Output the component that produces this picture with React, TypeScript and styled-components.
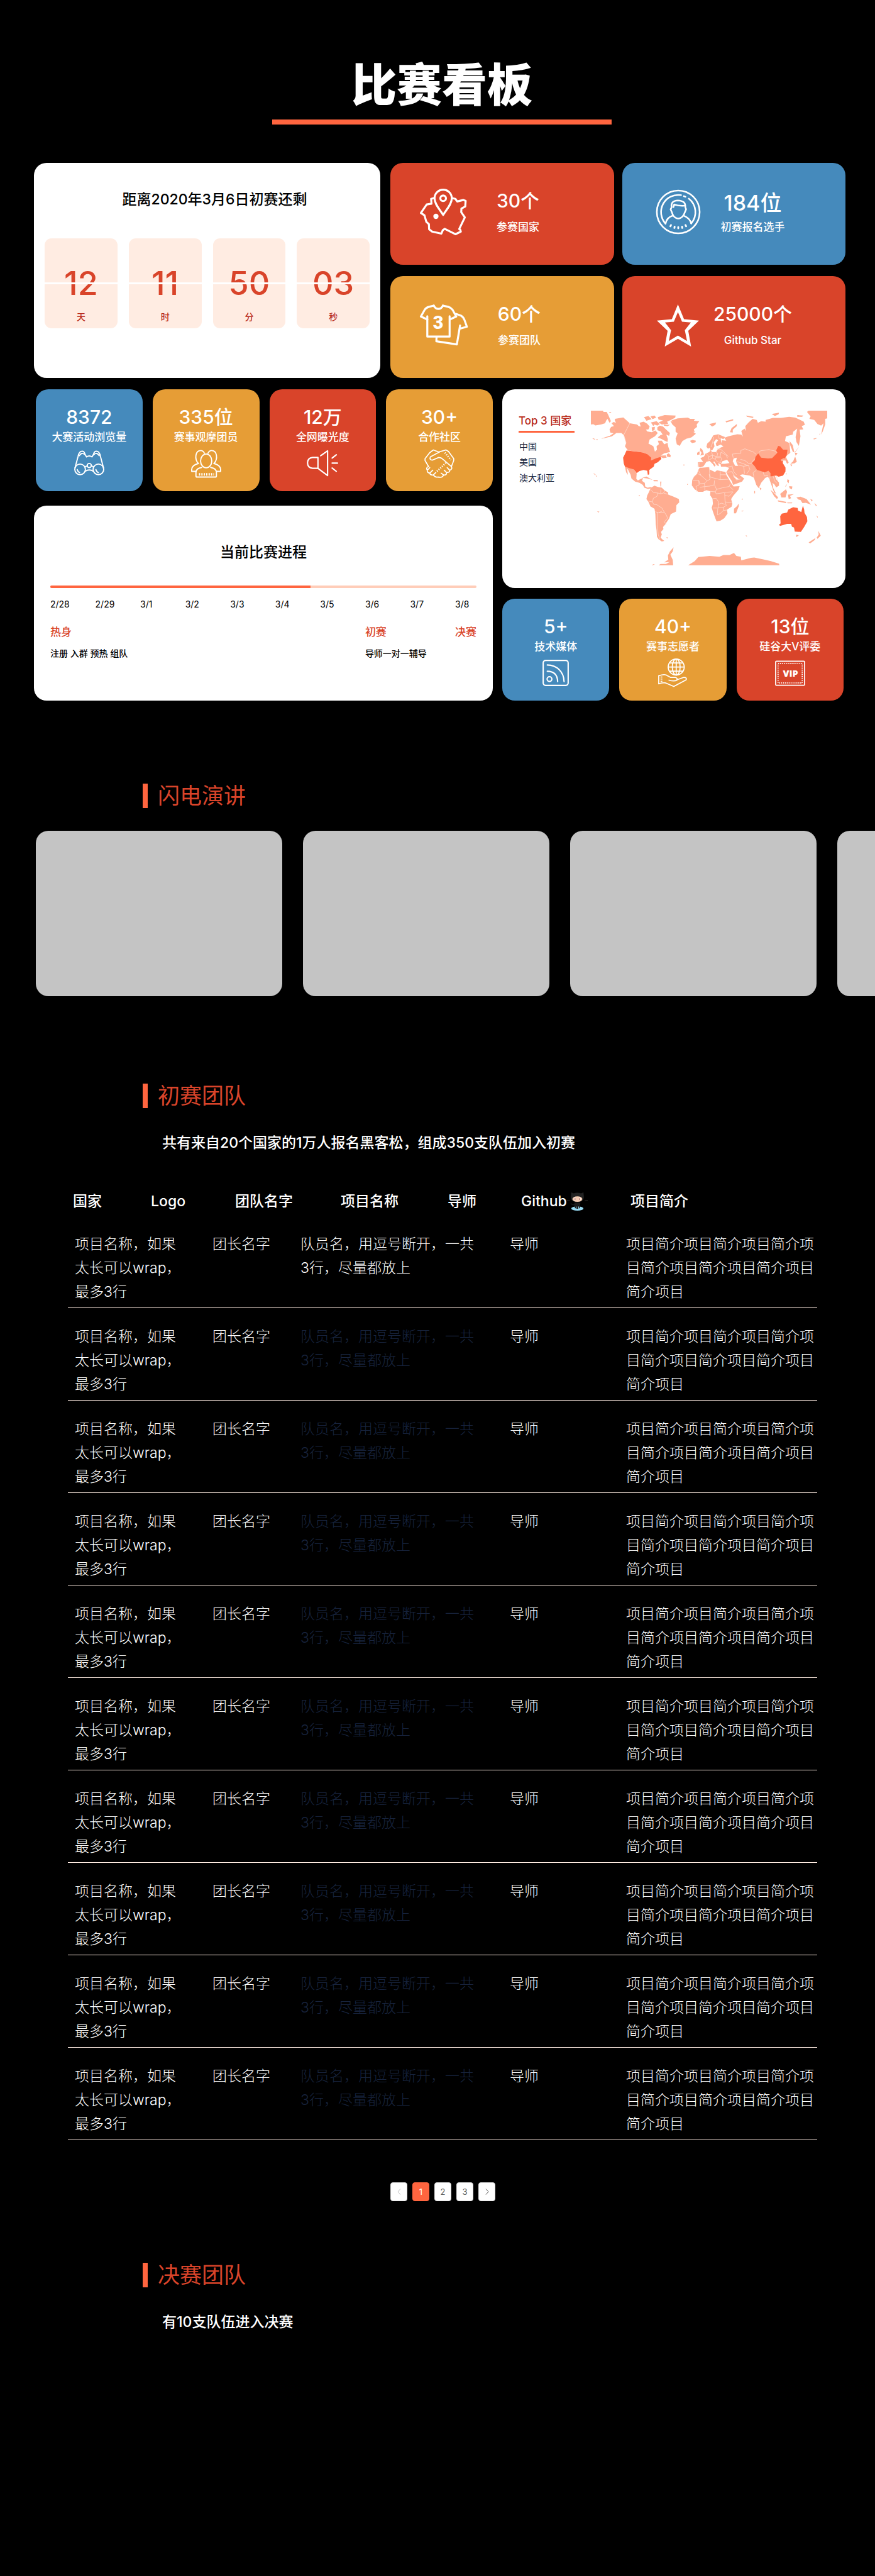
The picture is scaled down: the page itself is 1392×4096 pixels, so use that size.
import React from "react";
import styled, { createGlobalStyle } from "styled-components";

const palette = {
  red: "#d9442a",
  blue: "#458abc",
  orange: "#e69d36",
  coral: "#ff653f",
  land: "#ffad91",
  blush: "#ffece2",
  brick: "#b92b1b",
};

const GlobalStyle = createGlobalStyle`
  *, *::before, *::after { box-sizing: border-box; }
  body {
    margin: 0;
    background: #000;
    color: #fff;
    font-family: Inter, "Noto Sans CJK SC", sans-serif;
  }
  h1, h2, h3, p, ul, ol { margin: 0; padding: 0; }
  ul, ol { list-style: none; }
  svg { display: block; }
`;

const Page = styled.div`
  min-height: 100vh;
  padding: 95px 0 384px;
  overflow: hidden;
`;

const Header = styled.header`
  display: flex;
  flex-direction: column;
  align-items: center;
  padding-left: 14px;
`;

const PageTitle = styled.h1`
  font-size: 72px;
  font-weight: 900;
  line-height: 80px;
`;

const TitleRule = styled.div`
  width: 540px;
  max-width: 80%;
  height: 8px;
  margin-top: 15px;
  background: ${palette.coral};
`;

const Dashboard = styled.main`
  display: flex;
  flex-direction: column;
  gap: 18px;
  margin-top: 61px;
  padding: 0 47px 0 54px;
`;

const TopRow = styled.div`
  display: grid;
  grid-template-columns: 551fr 724fr;
  gap: 16px;
`;

const BottomRow = styled.div`
  display: grid;
  grid-template-columns: 730fr 546fr;
  gap: 15px;
`;

const Column = styled.div<{ $gap: number }>`
  display: flex;
  flex-direction: column;
  gap: ${(p) => p.$gap}px;
`;

const Panel = styled.section`
  border-radius: 20px;
  background: #fff;
  color: #000;
`;

const PanelTitle = styled.h2`
  font-size: 23px;
  font-weight: 500;
  line-height: 32px;
  text-align: center;
`;

const CountdownPanel = styled(Panel)`
  padding: 42px 17px 0;

  ${PanelTitle} {
    padding-left: 24px;
  }
`;

const Clock = styled.div`
  display: grid;
  grid-template-columns: repeat(4, 1fr);
  gap: 18px;
  margin-top: 46px;
`;

const ClockCell = styled.div`
  position: relative;
  display: flex;
  flex-direction: column;
  align-items: center;
  height: 143px;
  padding-top: 40px;
  border-radius: 11px;
  background: ${palette.blush};

  &::after {
    content: "";
    position: absolute;
    left: 0;
    right: 0;
    top: 70px;
    height: 3px;
    background: #fff;
  }
`;

const ClockValue = styled.span`
  color: ${palette.red};
  font-size: 52px;
  font-weight: 500;
  line-height: 64px;
`;

const ClockUnit = styled.span`
  margin-top: 11px;
  color: ${palette.brick};
  font-size: 14px;
  font-weight: 500;
  line-height: 20px;
`;

const StatGrid = styled.div`
  display: grid;
  grid-template-columns: 1fr 1fr;
  gap: 18px 13px;
`;

const StatCard = styled.article<{ $color: string; $inset: number }>`
  display: flex;
  height: 162px;
  padding: 40px 0 0 ${(p) => p.$inset}px;
  border-radius: 20px;
  background: ${(p) => p.$color};
`;

const StatIcon = styled.div`
  display: flex;
  flex: 0 0 76px;
  height: 76px;
  align-items: center;
  justify-content: center;
`;

const StatText = styled.div`
  display: flex;
  flex: 0 0 162px;
  flex-direction: column;
  align-items: center;
  justify-content: space-between;
  height: 74px;
`;

const Figure = styled.strong<{ $large?: boolean }>`
  font-size: ${(p) => (p.$large ? 34 : 30)}px;
  font-weight: 500;
  line-height: ${(p) => (p.$large ? 48 : 40)}px;
`;

const Caption = styled.span`
  font-size: 17px;
  font-weight: 500;
  line-height: 24px;
`;

const LeftTiles = styled.div`
  display: grid;
  grid-template-columns: repeat(4, 1fr);
  gap: 16px;
  padding-left: 3px;
`;

const RightTiles = styled.div`
  display: grid;
  grid-template-columns: repeat(3, 1fr);
  gap: 16px;
  padding-right: 3px;
`;

const TileCard = styled.article<{ $color: string }>`
  display: flex;
  flex-direction: column;
  align-items: center;
  height: 162px;
  padding-top: 24px;
  border-radius: 20px;
  background: ${(p) => p.$color};
`;

const TileIcon = styled.div`
  display: flex;
  align-items: center;
  height: 46px;
  margin-top: 7px;
`;

const ProgressPanel = styled(Panel)`
  height: 310px;
  padding: 58px 26px 0;
`;

const Track = styled.div`
  height: 4px;
  margin-top: 37px;
  border-radius: 2px;
  background: #ffcdb9;
  overflow: hidden;
`;

const TrackFill = styled.div`
  height: 100%;
  background: ${palette.coral};
`;

const Schedule = styled.ol`
  display: grid;
  grid-template-columns: repeat(9, 1fr) 34px;
  margin-top: 16px;
`;

const Day = styled.li`
  display: flex;
  flex-direction: column;
  min-width: 0;
  white-space: nowrap;
`;

const DayDate = styled.time`
  font-size: 14px;
  line-height: 20px;
`;

const DayStage = styled.strong`
  margin-top: 22px;
  color: ${palette.red};
  font-size: 17px;
  font-weight: 500;
  line-height: 24px;
`;

const DayNote = styled.span`
  margin-top: 12px;
  font-size: 14px;
  font-weight: 500;
  line-height: 20px;
`;

const MapPanel = styled(Panel)`
  display: flex;
  align-items: flex-start;
  gap: 26px;
  height: 316px;
  padding: 34px 29px 0 26px;
`;

const Ranking = styled.div`
  flex: 0 0 89px;
  padding-top: 4px;
`;

const RankingTitle = styled.h2`
  padding-bottom: 4px;
  border-bottom: 3px solid ${palette.coral};
  color: ${palette.brick};
  font-size: 17px;
  font-weight: 500;
  line-height: 24px;
  white-space: nowrap;
`;

const RankingList = styled.ol`
  padding: 9px 0 0 1px;
  color: #17233d;
  font-size: 14px;
  line-height: 25px;
`;

const MapBox = styled.div`
  flex: 1 1 0;
  min-width: 0;

  svg {
    width: 100%;
    height: auto;
  }
`;

const SectionHeading = styled.h2<{ $top: number }>`
  margin: ${(p) => p.$top}px 0 0 227px;
  padding-left: 16px;
  border-left: 8px solid ${palette.coral};
  color: ${palette.red};
  font-size: 35px;
  font-weight: 400;
  line-height: 39px;
`;

const SectionText = styled.p`
  margin: 38px 0 0 258px;
  font-size: 23px;
  font-weight: 500;
  line-height: 34px;
`;

const Carousel = styled.ul`
  display: flex;
  gap: 33px;
  margin-top: 36px;
  padding-left: 57px;
  overflow: hidden;
`;

const Slide = styled.li`
  flex: 0 0 392px;
  height: 263px;
  border-radius: 20px;
  background: #c4c4c4;
`;

const TeamTable = styled.table`
  display: block;
  margin: 57px 92px 0 108px;
  font-size: 23px;
  line-height: 38px;

  thead,
  tbody {
    display: block;
  }
`;

const HeadRow = styled.tr`
  display: grid;
  grid-template-columns: 124fr 134fr 168fr 170fr 117fr 174fr 297fr;
  padding: 0 0 4px 8px;
`;

const HeadCell = styled.th`
  display: flex;
  align-items: center;
  padding: 0;
  font-weight: 500;
  text-align: left;
  white-space: nowrap;
`;

const TeamRow = styled.tr`
  display: grid;
  grid-template-columns: 219fr 140fr 333fr 185fr 304fr;
  padding: 26px 0 6px 11px;
  border-bottom: 1px solid ${palette.blush};
`;

const Cell = styled.td<{ $dim?: boolean; $end?: number }>`
  padding: 0 ${(p) => p.$end || 0}px 0 0;
  color: ${(p) => (p.$dim ? "#17233d" : "#fff")};
  font-weight: 300;
`;

const Pager = styled.nav`
  display: flex;
  justify-content: center;
  gap: 8px;
  margin-top: 67px;
  padding-left: 17px;
`;

const PageButton = styled.button<{ $active?: boolean }>`
  display: flex;
  align-items: center;
  justify-content: center;
  width: 27px;
  height: 30px;
  padding: 0;
  border: 1px solid ${(p) => (p.$active ? palette.coral : "#d9d9d9")};
  border-radius: 4px;
  background: ${(p) => (p.$active ? palette.coral : "#fff")};
  color: ${(p) => (p.$active ? "#fff" : "#595959")};
  font-family: inherit;
  font-size: 13px;
  font-weight: 400;

  &:disabled {
    color: #bfbfbf;
  }
`;

const stroke = {
  fill: "none",
  stroke: "currentColor",
  strokeLinecap: "round" as const,
  strokeLinejoin: "round" as const,
};

const CountryIcon = () => (
  <svg width="76" height="76" viewBox="58 58 238 238" {...stroke} strokeWidth="10">
    <path d="M130 108 117 112 119 136 95 140 66 182 84 194 93 226 106 238 107 263 122 275 168 285 175 268 185 261 238 288 265 275 262 265 257 262 285 204 267 178 268 160 287 150 289 122 278 117 247 125 238 112 222 108" />
    <path d="M177 192C162 166 134 140 134 109a43 43 0 0 1 86 0c0 31-28 57-43 83Z" />
    <circle cx="177" cy="109" r="14" />
    <circle cx="141" cy="199" r="13" fill="currentColor" stroke="none" />
  </svg>
);

const ShirtIcon = () => (
  <svg width="78" height="68" viewBox="58 634 244 212" {...stroke} strokeWidth="10">
    <path d="M130 643 106 649Q92 653 86 662L66 697 98 712" />
    <path d="M176 643 202 649Q216 653 224 664L242 697 210 712" />
    <path d="M130 643Q138 659 153 659 168 659 176 643" />
    <path d="M98 696V797H209V696" />
    <path d="M240 684 266 693Q276 698 282 712L295 748 261 757M261 742 245 836 143 820 144 800" />
    <text x="152" y="758" fontSize="90" fontWeight="900" fontFamily="Roboto, sans-serif" textAnchor="middle" fill="currentColor" stroke="none">
      3
    </text>
  </svg>
);

const PlayerIcon = () => (
  <svg width="72" height="72" viewBox="1222 61 224 224" {...stroke} strokeWidth="8">
    <circle cx="1334" cy="173" r="106" />
    <path d="M1271 231A85 85 0 0 1 1348 90M1362 95 1370 98M1386 107A85 85 0 0 1 1398 230" />
    <path d="M1301 150Q1296 117 1332 116 1372 117 1369 150L1373 160 1366 176Q1360 196 1345 203 1334 208 1323 203 1308 196 1303 176L1296 160Z" />
    <path d="M1310 149 1314 136Q1334 144 1366 142" />
    <path d="M1306 192Q1278 200 1271 231M1362 192Q1392 204 1398 230" />
    <path d="M1298 238 1295 244M1316 246 1315 252M1334 248V254M1353 246 1354 252M1370 238 1373 244" strokeWidth="9" />
  </svg>
);

const StarIcon = () => (
  <svg width="67" height="67" viewBox="1237 632 208 208" fill="currentColor" fillRule="evenodd">
    <path d="M1341 632 1371 705 1445 712 1392 762 1406 840 1341 802 1276 840 1290 762 1237 712 1311 705ZM1341 670 1321 717 1277 721 1307 759 1296 813 1341 786 1386 813 1375 759 1405 721 1361 717Z" />
  </svg>
);

const BinocularsIcon = () => (
  <svg width="48" height="46" viewBox="0 0 50 48" {...stroke} strokeWidth="2">
    <circle cx="9.8" cy="33.7" r="8.8" />
    <circle cx="40.2" cy="33.7" r="8.8" />
    <circle cx="25" cy="27.3" r="3.4" />
    <path d="M1.4 31 6.5 12Q8 3.5 13.5 3.5 17 4 18 9L20.5 13Q25 10 29.5 13L32 9Q33 4 36.5 3.5 42 3.5 43.5 12L48.6 31" />
    <path d="M8.5 11Q12.5 4.5 17 9M33 9Q37.5 4.5 41.5 11" />
    <path d="M18 37Q25 32.5 32 37M18.5 29 21.5 28M31.5 29 28.5 28" />
    <path d="M5 34Q6 38 9 39M36 34Q37 38 40 39" />
  </svg>
);

const AudienceIcon = () => (
  <svg width="48" height="46" viewBox="0 0 50 48" {...stroke} strokeWidth="2">
    <ellipse cx="25" cy="19.7" rx="9.3" ry="11.5" />
    <path d="M12 24C5 16 7 2.5 16 2.5Q20 2.5 22 7M38 24C45 16 43 2.5 34 2.5Q30 2.5 28 7" />
    <path d="M12 24Q1 27 1 34V37H8M38 24Q49 27 49 34V37H42" />
    <path d="M17.5 30.5Q8 32 8 39V44.5Q8 46.5 10 46.5H40Q42 46.5 42 44.5V39Q42 32 32.5 30.5" />
    <path d="M13 42H38" strokeWidth="4" strokeDasharray="2 2" strokeLinecap="butt" />
  </svg>
);

const SpeakerIcon = () => (
  <svg width="50" height="46" viewBox="0 0 52 48" {...stroke} strokeWidth="2.2">
    <path d="M18.5 14H9.5Q1.2 15 1.2 23T9.5 32H18.5Z" />
    <path d="M23 11 34.5 3V44L18.5 32" />
    <path d="M42 15 49 9.5M42 23.3H51M42 31.5 49 37" />
  </svg>
);

const HandshakeIcon = () => (
  <svg width="48" height="46" viewBox="0 0 50 48" {...stroke} strokeWidth="1.8">
    <path d="M24 5 15 1.5 9 6 1.2 16V19L7 29" />
    <path d="M24 5 36 1.5 40 4 48.8 16V19L45 29" />
    <path d="M26 4.5 10 13Q8 18 13 18.5L24 14Q28 14 31 17L45 29" />
    <path d="M7 29Q2 31 5 35 4 39 9 40 10 44 15 43 18 47.5 24 46.5M5 35 9 31M9 40 14 35M15 43 19 39" />
    <path d="M45 29Q47 34 42 35 43 39 37 39 37 44 32 43 30 48 24 46.5M42 35 38 31M37 39 33 35M32 43 28 40" />
    <path d="M34 6 44 18M21 37 36 23" strokeWidth="3" strokeDasharray="1.6 2.2" strokeLinecap="butt" />
  </svg>
);

const FeedIcon = () => (
  <svg width="42" height="42" viewBox="0 0 44 44" {...stroke} strokeWidth="2.2">
    <rect x="1.2" y="1.2" width="41.6" height="41.6" rx="4" />
    <circle cx="11.7" cy="32.3" r="4" />
    <path d="M8 19.2Q25 19.5 25.3 36.5M8 8.8C24 9 35.5 20 36 36.5" />
  </svg>
);

const VolunteerIcon = () => (
  <svg width="46" height="46" viewBox="0 0 48 48" {...stroke} strokeWidth="1.8">
    <circle cx="30" cy="14.3" r="13.3" />
    <ellipse cx="30" cy="14.3" rx="6.5" ry="13.3" />
    <path d="M30 1V27.6M16.7 14.3H43.3M19 7.5H41M19 21H41" />
    <path d="M1 42V28.5Q12 25 16 29L21 31.5H29Q33 33 31 36 27 38.5 18 36" />
    <path d="M31 35.5 42 31.5Q48 31 46.5 35.5L26 46.5 12 40.5Q7 40 1 42" />
    <path d="M5.5 30V41" strokeDasharray="1.5 2" strokeWidth="3" strokeLinecap="butt" />
  </svg>
);

const VipIcon = () => (
  <svg width="48" height="41" viewBox="0 0 50 42" {...stroke}>
    <rect x="1" y="1" width="48" height="40" rx="1.5" strokeWidth="1.8" />
    <rect x="5" y="5" width="40" height="32" strokeWidth="1.8" strokeDasharray="1.6 1.6" strokeLinecap="butt" />
    <text x="25.5" y="27" fontSize="15" fontWeight="800" fontFamily="'Open Sans', sans-serif" textAnchor="middle" fill="currentColor" stroke="none">
      VIP
    </text>
  </svg>
);

const OctocatIcon = () => (
  <svg width="33" height="32" viewBox="0 0 34 33" aria-hidden="true">
    <ellipse cx="17" cy="28.5" rx="10" ry="3.4" fill="#9adcf5" />
    <path d="M12 19H22L21 28H19.5V24H18.5V29H15.5V24H14.5V28H13Z" fill="#1c1c1c" />
    <path d="M7 2 11 3.5Q17 1.5 23 3.5L27 2 27.5 7Q29 15 22 17.5 17 19 12 17.5 5 15 6.5 7Z" fill="#222" />
    <ellipse cx="17" cy="13" rx="8.2" ry="4.6" fill="#f4cbb2" />
    <ellipse cx="13" cy="12.8" rx="1.5" ry="2.2" fill="#fff" />
    <ellipse cx="21" cy="12.8" rx="1.5" ry="2.2" fill="#fff" />
    <ellipse cx="13.2" cy="13" rx="1" ry="1.5" fill="#ad5c51" />
    <ellipse cx="20.8" cy="13" rx="1" ry="1.5" fill="#ad5c51" />
    <path d="M6 20 9 22.5 13 22.5M0 15 5 15.5M29 15.5 34 15" stroke="#2a2a2a" fill="none" />
  </svg>
);

const land = [
  // Chukotka, left edge
  "M22 30H82L84 36H100L108 52 121 82 114 90 104 70 98 78 92 92 72 98 44 103 34 97 22 98Z",
  "M112 36H120L123 40H114Z",
  // Alaska and Canada
  "M141 70 182 63 214 92 184 150 172 140 148 140 126 156 88 166 72 168 116 153 134 142 118 138 114 122 122 110 136 106 124 92 134 86 146 90 140 78Z",
  "M32 166 44 170 42 173 30 169ZM48 171H56V174H48Z",
  "M214 92 250 98 258 106 268 108 290 118 300 132 322 136 340 128 352 140 338 156 312 172 306 192 330 205 338 232 348 222 346 205 358 195 352 178 372 178 384 196 400 188 404 208 413 234 384 240 366 252 392 250 396 262 378 264 366 258 330 276 316 276 318 262 300 244 278 236 205 226 190 206 196 190 188 160 184 150Z",
  "M262 90 282 84 300 94 312 108 306 122 290 124 280 116 268 108Z",
  "M284 62 306 56 322 72 296 80ZM318 88 346 82 362 96 350 104 336 98 330 106ZM322 112 338 110 336 126 324 130ZM316 58 336 54 344 64 326 72Z",
  "M350 112 362 104 378 108 392 122 412 140 408 154 394 148 402 170 400 184 386 178 372 170 352 162 366 150 376 148 366 132 350 126Z",
  "M352 62 386 52 440 54 438 64 420 74 398 84 404 94 372 98 356 88 378 78 356 74ZM382 98 412 100 400 107 382 104Z",
  "M396 246 406 240 416 250 414 260 398 256Z",
  // Greenland, Iceland
  "M414 80 426 84 420 78 450 68 500 64 512 70 536 70 530 80 557 82 544 98 546 110 530 122 534 136 526 134 540 144 518 162 494 168 474 180 460 204 446 196 440 168 450 142 440 134 440 112 424 98Z",
  "M512 178 524 174 540 178 538 186 522 190 514 184Z",
  // Mexico, Central America, Caribbean
  "M190 306 212 312 234 320 248 340 246 366 254 374 270 366 280 362 274 376 288 386 290 404 302 410 318 406 320 412 304 416 286 410 278 396 262 386 240 380 222 364 218 346 206 322 200 314 205 346 196 334Z",
  "M276 361 296 355 326 371 300 364ZM330 372H350L354 378H332ZM364 380H370L368 404H365Z",
  // South America
  "M318 410 336 400 352 406 372 410 386 424 402 432 404 444 430 454 456 466 458 482 444 496 442 528 416 540 408 562 396 580 390 590 378 604 380 614 368 628 372 640 366 656 374 664 384 672 372 675 356 664 348 652 346 620 342 590 340 540 336 514 316 502 306 480 296 466 300 448 306 436Z",
  // Africa, Madagascar
  "M558 312 604 308 608 320 634 332 644 324 686 332 690 346 702 366 716 390 726 404 756 402 750 420 724 450 714 466 720 490 716 504 694 518 696 538 680 560 662 572 642 576 634 556 624 528 618 508 624 490 622 464 610 446 612 428 592 422 574 430 552 430 534 418 520 398 522 372 532 354 546 340 552 322Z",
  "M750 488 752 500 738 536 728 536 728 514 744 500Z",
  // Europe and Asia
  "M550 284 576 283 562 264 580 256 588 242 606 234 612 224 620 234 640 234 646 222 662 212 676 206 664 198 668 176 690 178 680 164 700 156 720 152 744 146 764 148 772 158 764 130 780 118 786 130 784 106 800 88 820 70 840 76 846 90 862 82 884 84 884 76 920 66 960 66 1000 60 1030 64 1072 84 1078 100 1062 106 1070 122 1052 124 1056 156 1048 204 1036 184 1032 160 1040 118 1020 134 1018 148 984 156 980 180 1002 190 1006 238 990 250 984 258 998 286 990 292 982 276 966 276 970 290 982 318 970 346 946 354 930 352 936 368 950 384 950 400 936 408 928 394 918 386 922 412 936 440 926 434 914 400 904 372 896 356 882 362 862 386 850 412 838 396 826 360 806 350 770 344 756 348 778 364 768 380 724 396 716 376 700 352 690 334 704 312 686 306 664 306 662 294 650 288 654 304 644 300 630 280 626 284 638 298 632 306 622 292 608 278 592 282 578 304 562 310 550 306Z",
  "M592 208 596 192 610 180 626 152 650 146 684 160 676 170 662 166 666 196 642 206 638 192 650 176 640 170 628 186 632 206 620 226 612 224 608 212 600 218Z",
  "M562 214 572 222 580 246 562 252 568 238 560 226ZM546 238 558 230 558 246 546 248Z",
  "M708 136 716 116 742 96 742 106 722 124 722 138ZM606 96 640 88 636 100 620 108ZM686 82 724 72 724 78 690 88ZM788 54 824 60 822 66 792 60ZM914 46 950 40 948 48 930 56ZM1040 52 1070 54 1064 60 1040 60Z",
  // Chukotka, right edge
  "M1088 36 1096 30H1188V68L1178 70 1178 98 1166 132 1158 148 1166 110 1170 92 1158 104 1140 96 1124 76 1100 70 1106 58Z",
  "M1120 168 1136 164 1134 168 1122 172ZM1148 146 1154 142 1152 148Z",
  // East Asian islands
  "M1002 180 1018 200 1026 236 1018 232 1006 202ZM1028 236 1042 240 1032 252ZM1030 256 1038 282 1026 290 1006 292 1020 280 1026 264ZM1006 294 1016 296 1010 306ZM1028 234 1050 206 1032 232ZM984 336 988 340 986 348ZM854 408 864 414 858 422Z",
  "M992 368 1000 372 998 388 990 380ZM1000 402 1016 404 1014 418 1002 412ZM980 404 992 390 984 404Z",
  "M908 420 924 434 946 458 940 466 926 452ZM944 472 986 480 984 486 946 478ZM990 483H1016L1014 487H992ZM956 440 984 418 990 430 982 458 962 458ZM994 444 1024 442 1004 450 1010 462 998 466Z",
  "M1036 458 1056 454 1086 466 1108 494 1098 490 1082 484 1066 486 1056 470 1046 468ZM1104 466 1116 470 1112 478ZM1124 484 1138 498 1132 500ZM1134 546 1142 554 1140 558Z",
  "M1034 642 1048 644 1036 654ZM1144 622 1156 646 1140 662 1136 656 1146 642ZM1096 680 1130 658 1126 668 1104 684Z",
  // Scattered islands
  "M34 336 46 346 42 348ZM46 348 52 354 48 356ZM52 526 64 528 60 532ZM786 644 794 648 788 650ZM394 654 404 656 398 660ZM258 448H264V452H258ZM478 296H484V300H478ZM500 388V396H496ZM764 524 776 522 768 528ZM770 460V470H766ZM828 426H832V438H828Z",
  // Antarctica
  "M502 792 534 772 552 752 608 746 656 750 676 742 706 742 728 732 740 746 762 750 764 768 812 756 828 754 884 766 910 772 950 784 952 792Z",
  "M356 792 366 786 392 786 412 776 384 778 404 764 402 744 412 724 430 704 426 724 414 740 426 766 428 792ZM320 792 334 786 336 790Z",
].join("");

const topCountries = [
  "M198 226 278 236 300 244 320 262 318 276 346 264 366 258 370 268 352 284 336 292 332 306 310 322 310 344 303 346 300 326 282 322 262 328 248 338 234 320 212 314 190 306 184 290 181 262 190 244Z",
  "M848 240 854 250 862 262 896 266 916 264 942 238 936 226 946 204 956 206 970 222 992 222 988 250 978 266 972 264 958 272 962 280 970 276 968 288 982 310 982 330 970 350 948 356 936 348 922 352 908 354 908 338 898 326 880 334 842 322 830 304 816 288 830 276 834 258Z",
  "M955 598 950 592 958 586 956 550 964 538 990 532 996 518 1012 510 1020 506 1042 510 1044 522 1060 530 1068 498 1074 516 1076 534 1088 554 1090 576 1074 604 1058 628 1028 626 1024 606 1014 602 1010 588 990 588 972 594Z",
].join("");

const seas =
  "M670 280 694 272 706 288 684 292 664 292ZM726 266 742 262 738 280 748 302 734 302 722 280ZM724 346 752 368 742 370 728 358ZM640 204 662 208 648 220 640 216Z";

const borders = [
  "M214 92 184 150M184 150 196 190",
  "M528 358 548 340 566 350 596 376 610 368 606 308M566 350 552 324M610 368 606 344 612 358 660 370 660 328M660 346 692 346M660 370 702 368M524 374 554 374 560 390 582 388 596 376M582 388 584 404 608 402 630 396 632 374M554 374 556 396 540 404 546 430M560 408 584 404 584 424M632 396 642 418 672 410 704 404 710 390M612 428 636 430 642 418M636 430 640 440 668 436 690 432 722 430M622 464 640 462 652 480 650 492 668 486 682 492M682 436 684 480 716 484M624 510 650 510 650 492M650 510 676 506 690 498 684 480M646 544 648 512M646 544 662 536 676 522 676 506M724 430 704 452 684 448M676 522 694 520M706 404 724 420",
  "M316 420 332 434 352 436 348 452 330 462 326 480 306 476M352 436 366 440 368 414M366 440 380 436 386 426M380 436 402 442M326 480 332 492 348 494 372 510 384 530 396 548 400 560 384 578 394 590M340 528 356 534 372 526M352 530 350 590 354 640 362 664M356 534 384 530",
  "M846 244 858 228 900 222 934 230 942 238M838 246 824 234 782 218 762 226 762 240 720 244 724 262M760 270 782 276 800 290 816 288 822 276 838 262M746 298 776 304 800 300 806 320 790 342M776 304 780 340M740 280 770 290 800 302M718 300 726 330 740 346M698 308 716 304M696 334 718 330 740 372 764 366M826 356 822 336 838 324M872 334 878 352 896 350M906 354 904 372M922 354 928 376 940 388M936 350 944 374",
  "M590 240 604 256 600 276M604 256 622 250 618 234M622 250 640 256 660 256 664 234M640 256 636 270 648 284M660 256 668 268 662 280M640 234 648 240 644 256M664 234 690 250 696 264M622 250 622 264 606 272M636 270 622 264M644 218 662 220 676 232 700 256M628 160 622 190 614 210M650 150 656 170M556 286 554 306M660 262 640 262M664 286 646 282",
].join("");

const WorldMap = () => (
  <svg viewBox="22 30 1166 762" role="img" aria-label="世界地图">
    <path d={land} fill={palette.land} />
    <path d={seas} fill="#fff" />
    <path d={borders} fill="none" stroke="#ffdccf" strokeWidth="2.5" strokeLinejoin="round" />
    <path d={topCountries} fill={palette.coral} />
  </svg>
);

const countdown = [
  ["12", "天"],
  ["11", "时"],
  ["50", "分"],
  ["03", "秒"],
];

const stats = [
  { value: "30个", label: "参赛国家", color: palette.red, inset: 46, icon: <CountryIcon /> },
  { value: "184位", label: "初赛报名选手", color: palette.blue, inset: 51, large: true, icon: <PlayerIcon /> },
  { value: "60个", label: "参赛团队", color: palette.orange, inset: 46, icon: <ShirtIcon /> },
  { value: "25000个", label: "Github Star", color: palette.red, inset: 51, icon: <StarIcon /> },
];

const leftTiles = [
  { value: "8372", label: "大赛活动浏览量", color: palette.blue, icon: <BinocularsIcon /> },
  { value: "335位", label: "赛事观摩团员", color: palette.orange, icon: <AudienceIcon /> },
  { value: "12万", label: "全网曝光度", color: palette.red, icon: <SpeakerIcon /> },
  { value: "30+", label: "合作社区", color: palette.orange, icon: <HandshakeIcon /> },
];

const rightTiles = [
  { value: "5+", label: "技术媒体", color: palette.blue, icon: <FeedIcon /> },
  { value: "40+", label: "赛事志愿者", color: palette.orange, icon: <VolunteerIcon /> },
  { value: "13位", label: "硅谷大V评委", color: palette.red, icon: <VipIcon /> },
];

const schedule: { date: string; stage?: string; note?: string }[] = [
  { date: "2/28", stage: "热身", note: "注册 入群 预热 组队" },
  { date: "2/29" },
  { date: "3/1" },
  { date: "3/2" },
  { date: "3/3" },
  { date: "3/4" },
  { date: "3/5" },
  { date: "3/6", stage: "初赛", note: "导师一对一辅导" },
  { date: "3/7" },
  { date: "3/8", stage: "决赛" },
];

const progress = 61;

const teams = Array.from({ length: 10 }, (_, id) => ({
  id,
  project: "项目名称，如果太长可以wrap，最多3行",
  leader: "团长名字",
  members: "队员名，用逗号断开，一共3行，尽量都放上",
  mentor: "导师",
  intro: "项目简介".repeat(7) + "项目",
}));

type TileProps = { value: string; label: string; color: string; icon: React.ReactNode };

const Tile = ({ value, label, color, icon }: TileProps) => (
  <TileCard $color={color}>
    <Figure>{value}</Figure>
    <Caption>{label}</Caption>
    <TileIcon>{icon}</TileIcon>
  </TileCard>
);

const Chevron = ({ d }: { d: string }) => (
  <svg width="8" height="12" viewBox="0 0 8 12" fill="none" stroke="currentColor">
    <path d={d} />
  </svg>
);

export default function App() {
  return (
    <Page>
      <GlobalStyle />
      <Header>
        <PageTitle>比赛看板</PageTitle>
        <TitleRule />
      </Header>

      <Dashboard>
        <TopRow>
          <CountdownPanel>
            <PanelTitle>距离2020年3月6日初赛还剩</PanelTitle>
            <Clock>
              {countdown.map(([value, unit]) => (
                <ClockCell key={unit}>
                  <ClockValue>{value}</ClockValue>
                  <ClockUnit>{unit}</ClockUnit>
                </ClockCell>
              ))}
            </Clock>
          </CountdownPanel>
          <StatGrid>
            {stats.map((s) => (
              <StatCard key={s.label} $color={s.color} $inset={s.inset}>
                <StatIcon>{s.icon}</StatIcon>
                <StatText>
                  <Figure $large={s.large}>{s.value}</Figure>
                  <Caption>{s.label}</Caption>
                </StatText>
              </StatCard>
            ))}
          </StatGrid>
        </TopRow>

        <BottomRow>
          <Column $gap={23}>
            <LeftTiles>
              {leftTiles.map((t) => (
                <Tile key={t.label} {...t} />
              ))}
            </LeftTiles>
            <ProgressPanel>
              <PanelTitle>当前比赛进程</PanelTitle>
              <Track>
                <TrackFill style={{ width: `${progress}%` }} />
              </Track>
              <Schedule>
                {schedule.map((d) => (
                  <Day key={d.date}>
                    <DayDate>{d.date}</DayDate>
                    {d.stage && <DayStage>{d.stage}</DayStage>}
                    {d.note && <DayNote>{d.note}</DayNote>}
                  </Day>
                ))}
              </Schedule>
            </ProgressPanel>
          </Column>
          <Column $gap={17}>
            <MapPanel>
              <Ranking>
                <RankingTitle>Top 3 国家</RankingTitle>
                <RankingList>
                  <li>中国</li>
                  <li>美国</li>
                  <li>澳大利亚</li>
                </RankingList>
              </Ranking>
              <MapBox>
                <WorldMap />
              </MapBox>
            </MapPanel>
            <RightTiles>
              {rightTiles.map((t) => (
                <Tile key={t.label} {...t} />
              ))}
            </RightTiles>
          </Column>
        </BottomRow>
      </Dashboard>

      <SectionHeading $top={132}>闪电演讲</SectionHeading>
      <Carousel>
        <Slide />
        <Slide />
        <Slide />
        <Slide />
      </Carousel>

      <SectionHeading $top={139}>初赛团队</SectionHeading>
      <SectionText>共有来自20个国家的1万人报名黑客松，组成350支队伍加入初赛</SectionText>
      <TeamTable>
        <thead>
          <HeadRow>
            <HeadCell>国家</HeadCell>
            <HeadCell>Logo</HeadCell>
            <HeadCell>团队名字</HeadCell>
            <HeadCell>项目名称</HeadCell>
            <HeadCell>导师</HeadCell>
            <HeadCell>
              Github
              <OctocatIcon />
            </HeadCell>
            <HeadCell>项目简介</HeadCell>
          </HeadRow>
        </thead>
        <tbody>
          {teams.map((t) => (
            <TeamRow key={t.id}>
              <Cell $end={40}>{t.project}</Cell>
              <Cell>{t.leader}</Cell>
              <Cell $end={44} $dim={t.id > 0}>
                {t.members}
              </Cell>
              <Cell>{t.mentor}</Cell>
              <Cell>{t.intro}</Cell>
            </TeamRow>
          ))}
        </tbody>
      </TeamTable>
      <Pager aria-label="分页">
        <PageButton type="button" disabled aria-label="上一页">
          <Chevron d="M6 1.5 2 6l4 4.5" />
        </PageButton>
        <PageButton type="button" $active aria-current="page">
          1
        </PageButton>
        <PageButton type="button">2</PageButton>
        <PageButton type="button">3</PageButton>
        <PageButton type="button" aria-label="下一页">
          <Chevron d="M2 1.5 6 6l-4 4.5" />
        </PageButton>
      </Pager>

      <SectionHeading $top={98}>决赛团队</SectionHeading>
      <SectionText>有10支队伍进入决赛</SectionText>
    </Page>
  );
}
